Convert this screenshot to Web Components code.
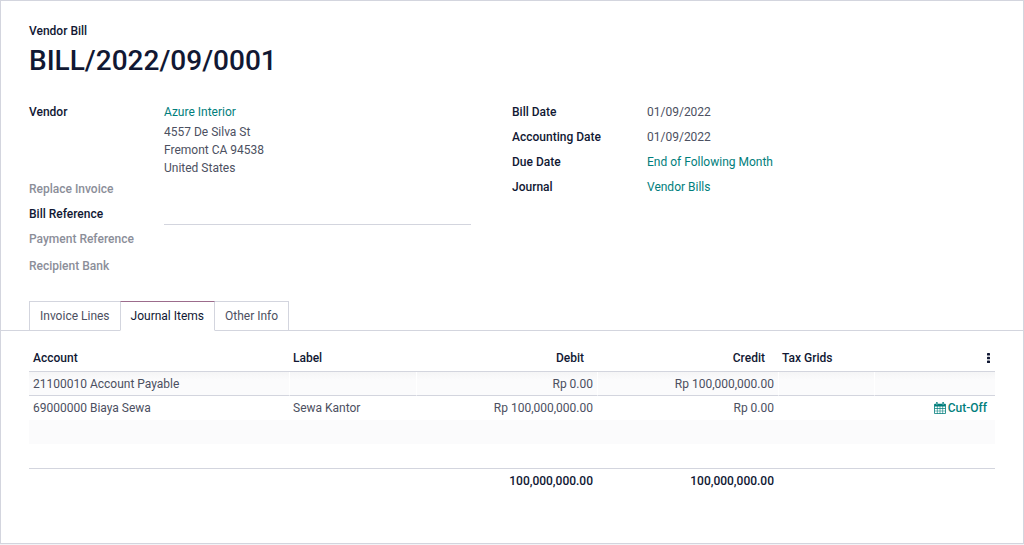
<!DOCTYPE html>
<html lang="en">
<head>
<meta charset="utf-8">
<meta name="viewport" content="width=device-width, initial-scale=1">
<title>BILL/2022/09/0001</title>
<style>
  :root {
    --ink: #111833;
    --body-text: #4c5061;
    --muted: #8b8e99;
    --link: #017e7c;
    --brand: #9c6c8c;
    --line: #d3d5de;
    --stripe: #fbfbfc;
  }
  body {
    margin: 0;
    background: #f3f3f6;
    color: var(--body-text);
    font: 12px/18px Roboto, "Open Sans", sans-serif;
  }
</style>
</head>
<body>

<bill-sheet>
  <record-title slot="title" kind="Vendor Bill">BILL/2022/09/0001</record-title>

  <field-group slot="fields">
    <form-field label="Vendor">
      <text-link>Azure Interior</text-link>
      <postal-address>4557 De Silva St<br>Fremont CA 94538<br>United States</postal-address>
    </form-field>
    <form-field label="Replace Invoice" empty></form-field>
    <form-field label="Bill Reference" editable></form-field>
    <form-field label="Payment Reference" empty></form-field>
    <form-field label="Recipient Bank" empty last></form-field>
  </field-group>

  <field-group slot="fields">
    <form-field label="Bill Date">01/09/2022</form-field>
    <form-field label="Accounting Date">01/09/2022</form-field>
    <form-field label="Due Date"><text-link>End of Following Month</text-link></form-field>
    <form-field label="Journal"><text-link>Vendor Bills</text-link></form-field>
  </field-group>

  <note-book slot="pages" tabs="Invoice Lines,Journal Items,Other Info" active="1">
    <journal-items></journal-items>
  </note-book>
</bill-sheet>

<script>
class BillSheet extends HTMLElement {
  constructor () {
    super()
    this.attachShadow({ mode: 'open' })
  }

  connectedCallback () {
    this.shadowRoot.innerHTML = `
    <style>
      :host {
        display: block;
        background: white;
        border: 1px solid var(--line);
      }
      header {
        padding: 21px 28px 0;
      }
      .fields {
        display: grid;
        grid-template-columns: 1fr 1fr;
        padding: 18px 28px 20px;
      }
    </style>
    <header><slot name="title"></slot></header>
    <div class="fields"><slot name="fields"></slot></div>
    <slot name="pages"></slot>
    `
  }
}

class RecordTitle extends HTMLElement {
  constructor () {
    super()
    this.attachShadow({ mode: 'open' })
  }

  connectedCallback () {
    this.shadowRoot.innerHTML = `
    <style>
      :host {
        display: block;
        color: var(--ink);
      }
      p, h1 {
        margin: 0;
        font-weight: 500;
      }
      h1 {
        font-size: 28px;
        line-height: 42px;
      }
    </style>
    <p>${this.getAttribute('kind')}</p>
    <h1><slot></slot></h1>
    `
  }
}

class FieldGroup extends HTMLElement {
  constructor () {
    super()
    this.attachShadow({ mode: 'open' })
  }

  connectedCallback () {
    this.shadowRoot.innerHTML = `
    <style>
      :host {
        display: block;
        padding-right: 41px;
      }
    </style>
    <slot></slot>
    `
  }
}

class FormField extends HTMLElement {
  constructor () {
    super()
    this.attachShadow({ mode: 'open' })
  }

  connectedCallback () {
    const label = this.getAttribute('label')
    const editable = this.hasAttribute('editable')
    this.shadowRoot.innerHTML = `
    <style>
      :host {
        display: grid;
        grid-template-columns: 135px 1fr;
        min-height: 25px;
        line-height: 25px;
      }
      :host([last]) {
        min-height: 29px;
        line-height: 29px;
      }
      .label {
        color: var(--ink);
        font-weight: 500;
      }
      :host([empty]) .label {
        color: var(--muted);
      }
      input {
        box-sizing: border-box;
        width: 100%;
        height: 23px;
        display: block;
        padding: 0;
        border: 0;
        border-bottom: 1px solid var(--line);
        background: none;
        color: inherit;
        font: inherit;
        outline: none;
      }
      input:focus {
        border-color: var(--link);
      }
    </style>
    ${editable
      ? `<label class="label" for="value">${label}</label><input type="text" id="value">`
      : `<span class="label">${label}</span><div><slot></slot></div>`}
    `
  }
}

class PostalAddress extends HTMLElement {
  constructor () {
    super()
    this.attachShadow({ mode: 'open' })
  }

  connectedCallback () {
    this.shadowRoot.innerHTML = `
    <style>
      :host {
        display: block;
        line-height: 18px;
        margin-top: -2px;
      }
    </style>
    <slot></slot>
    `
  }
}

class TextLink extends HTMLElement {
  constructor () {
    super()
    this.attachShadow({ mode: 'open' })
  }

  connectedCallback () {
    this.shadowRoot.innerHTML = `
    <style>
      a {
        color: var(--link);
        text-decoration: none;
      }
      a:hover {
        text-decoration: underline;
      }
    </style>
    <a href="#"><slot></slot></a>
    `
  }
}

class NoteBook extends HTMLElement {
  constructor () {
    super()
    this.attachShadow({ mode: 'open' })
  }

  connectedCallback () {
    const active = Number(this.getAttribute('active'))
    const tabs = this.getAttribute('tabs').split(',')
    this.shadowRoot.innerHTML = `
    <style>
      :host {
        display: block;
      }
      nav {
        display: flex;
        padding: 0 28px;
        border-bottom: 1px solid var(--line);
      }
      button {
        height: 30px;
        margin: 0 -1px -1px 0;
        padding: 0 10px;
        background: white;
        border: 1px solid var(--line);
        color: var(--body-text);
        font: inherit;
        cursor: pointer;
      }
      button.active {
        position: relative;
        color: var(--ink);
        border-top-color: var(--brand);
        border-bottom-color: white;
      }
      .page {
        padding: 14px 28px 51px;
      }
    </style>
    <nav role="tablist">
      ${tabs.map((tab, i) => `<button role="tab" class="${i === active ? 'active' : ''}" aria-selected="${i === active}">${tab}</button>`).join('')}
    </nav>
    <div class="page"><slot></slot></div>
    `
    const buttons = this.shadowRoot.querySelectorAll('button')
    buttons.forEach(button => {
      button.addEventListener('click', () => {
        buttons.forEach(other => {
          other.classList.toggle('active', other === button)
          other.setAttribute('aria-selected', other === button)
        })
      })
    })
  }
}

class CutOffButton extends HTMLElement {
  constructor () {
    super()
    this.attachShadow({ mode: 'open' })
  }

  connectedCallback () {
    this.shadowRoot.innerHTML = `
    <style>
      :host {
        display: flex;
        justify-content: flex-end;
      }
      button {
        display: flex;
        align-items: center;
        gap: 2px;
        padding: 0;
        border: 0;
        background: none;
        color: var(--link);
        font: inherit;
        font-weight: 500;
        cursor: pointer;
      }
      svg {
        display: block;
      }
    </style>
    <button>
      <svg width="12" height="12" viewBox="0 0 12 12" aria-hidden="true">
        <path fill="currentColor" fill-rule="evenodd" d="M1 1.7h1V1a.9.9 0 0 1 1.8 0v.7h4.4V1A.9.9 0 0 1 10 1v.7h1a.9.9 0 0 1 .9.9v8.5a.9.9 0 0 1-.9.9H1a.9.9 0 0 1-.9-.9V2.6A.9.9 0 0 1 1 1.7ZM.9 4.6v1.7h2V4.6Zm2.6 0v1.7h2.2V4.6Zm2.8 0v1.7h2.2V4.6Zm2.8 0v1.7h2V4.6ZM.9 6.9v1.8h2V6.9Zm2.6 0v1.8h2.2V6.9Zm2.8 0v1.8h2.2V6.9Zm2.8 0v1.8h2V6.9ZM.9 9.3v1.9h2V9.3Zm2.6 0v1.9h2.2V9.3Zm2.8 0v1.9h2.2V9.3Zm2.8 0v1.9h2V9.3ZM2.7 1v1.9h.5V1Zm6.1 0v1.9h.5V1Z"/>
      </svg>
      <slot></slot>
    </button>
    `
  }
}

class JournalItems extends HTMLElement {
  constructor () {
    super()
    this.attachShadow({ mode: 'open' })
    this.items = [
      { account: '21100010 Account Payable', label: '', debit: 'Rp 0.00', credit: 'Rp 100,000,000.00' },
      { account: '69000000 Biaya Sewa', label: 'Sewa Kantor', debit: 'Rp 100,000,000.00', credit: 'Rp 0.00', cutOff: true }
    ]
  }

  connectedCallback () {
    this.render()
  }

  render () {
    this.shadowRoot.innerHTML = `
    <style>
      :host {
        display: block;
      }
      table {
        width: 100%;
        table-layout: fixed;
        border-collapse: separate;
        border-spacing: 0;
      }
      .label { width: 127px; }
      .amount { width: 181px; }
      .tax { width: 96px; }
      .action { width: 121px; }
      th, td {
        box-sizing: border-box;
        height: 24px;
        padding: 0 4px;
        text-align: left;
        white-space: nowrap;
      }
      th {
        height: 27px;
        color: var(--ink);
        font-weight: 500;
        border-bottom: 1px solid var(--line);
      }
      .num {
        text-align: right;
      }
      th.num {
        padding-right: 13px;
      }
      .end {
        padding-right: 8px;
      }
      th.end {
        padding-right: 4px;
      }
      tbody tr:nth-child(odd) {
        background: var(--stripe);
      }
      tbody tr:first-child td {
        border-bottom: 1px solid var(--line);
        background: linear-gradient(#f5f5f6, var(--stripe) 8px);
      }
      tbody tr:first-child td + td {
        border-left: 1px solid white;
      }
      tfoot td {
        color: var(--ink);
        font-weight: 500;
        border-top: 1px solid var(--line);
      }
      .more {
        display: block;
        margin-left: auto;
        padding: 0;
        border: 0;
        background: none;
        color: inherit;
        cursor: pointer;
      }
      .more svg {
        display: block;
      }
    </style>
    <table>
      <colgroup>
        <col><col class="label"><col class="amount"><col class="amount"><col class="tax"><col class="action">
      </colgroup>
      <thead>
        <tr>
          <th>Account</th>
          <th>Label</th>
          <th class="num">Debit</th>
          <th class="num">Credit</th>
          <th>Tax Grids</th>
          <th class="end">
            <button class="more" aria-label="Optional columns">
              <svg width="4" height="12" viewBox="0 0 4 12" fill="currentColor">
                <rect x="0" y="1" width="3" height="2.6" rx=".6"/>
                <rect x="0" y="4.7" width="3" height="2.6" rx=".6"/>
                <rect x="0" y="8.4" width="3" height="2.6" rx=".6"/>
              </svg>
            </button>
          </th>
        </tr>
      </thead>
      <tbody>
        ${this.items.map(item => `
        <tr>
          <td>${item.account}</td>
          <td>${item.label}</td>
          <td class="num">${item.debit}</td>
          <td class="num">${item.credit}</td>
          <td></td>
          <td class="end">${item.cutOff ? '<cut-off-button>Cut-Off</cut-off-button>' : ''}</td>
        </tr>`).join('')}
        <tr><td colspan="6"></td></tr>
        <tr><td colspan="6"></td></tr>
      </tbody>
      <tfoot>
        <tr>
          <td></td>
          <td></td>
          <td class="num">100,000,000.00</td>
          <td class="num">100,000,000.00</td>
          <td></td>
          <td></td>
        </tr>
      </tfoot>
    </table>
    `
  }
}

customElements.define('bill-sheet', BillSheet)
customElements.define('record-title', RecordTitle)
customElements.define('field-group', FieldGroup)
customElements.define('form-field', FormField)
customElements.define('postal-address', PostalAddress)
customElements.define('text-link', TextLink)
customElements.define('note-book', NoteBook)
customElements.define('cut-off-button', CutOffButton)
customElements.define('journal-items', JournalItems)
</script>
</body>
</html>
